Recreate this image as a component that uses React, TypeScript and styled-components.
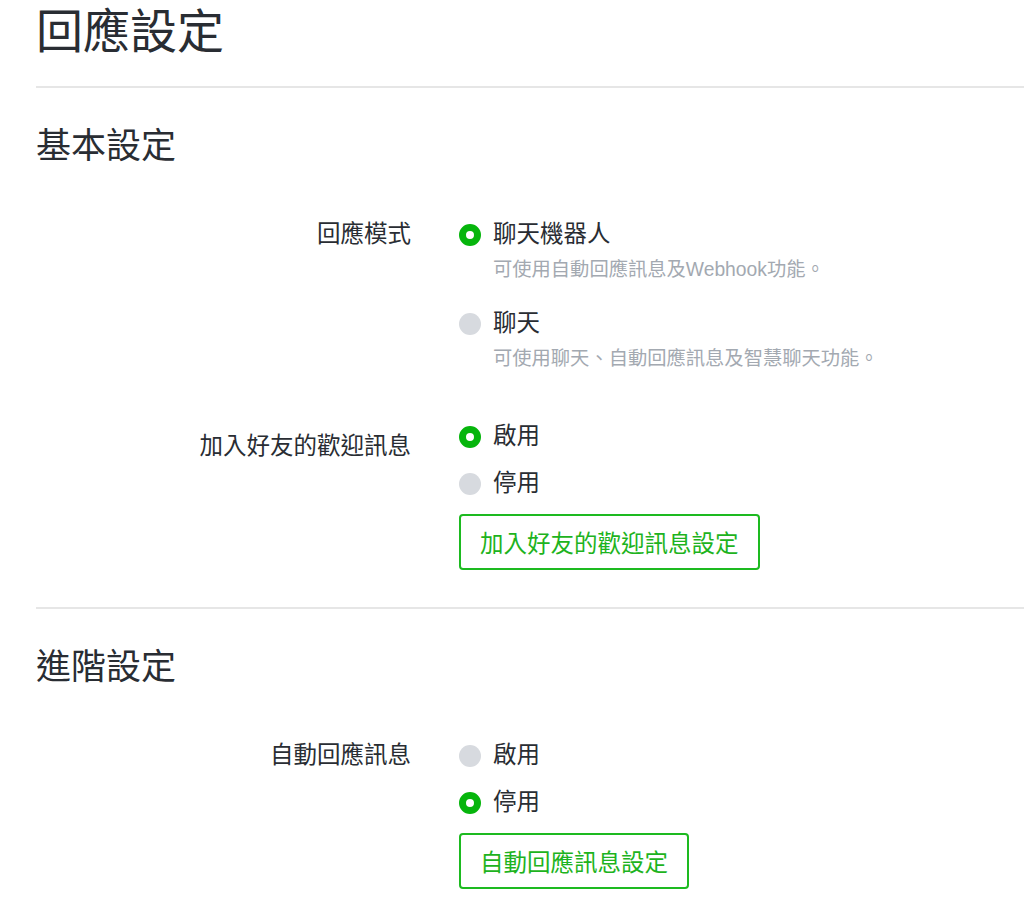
import React from "react";
import styled, { createGlobalStyle } from "styled-components";

const FONT = `"Liberation Sans", "Noto Sans CJK TC", sans-serif`;

const Global = createGlobalStyle`
  html, body { margin: 0; padding: 0; background: #ffffff; }
  body {
    font-family: ${FONT};
    color: #292d33;
  }
`;

const Page = styled.div`
  padding: 0 0 0 36px;
`;

const Title = styled.h1`
  margin: 0;
  font-size: 47px;
  line-height: 64px;
  font-weight: 400;
`;

const Divider = styled.hr<{ $top: number }>`
  margin: ${(p) => p.$top}px 0 0 0;
  border: 0;
  height: 2px;
  background: #e6e6e6;
`;

const SectionTitle = styled.h2`
  margin: 33px 0 0 0;
  font-size: 35px;
  line-height: 50px;
  font-weight: 400;
`;

const Row = styled.div`
  display: grid;
  grid-template-columns: 375px 1fr;
  column-gap: 48px;
  margin-top: 45px;
  &:nth-of-type(n + 2) {
    margin-top: 35px;
  }
`;

const Label = styled.div<{ $offset?: number }>`
  text-align: right;
  font-size: 23.5px;
  line-height: 36px;
  padding-top: ${(p) => p.$offset ?? 0}px;
`;

const Options = styled.div`
  display: flex;
  flex-direction: column;
  align-items: flex-start;
  gap: 11px;
`;

const OptionBlock = styled.div`
  display: flex;
  flex-direction: column;
`;

const Option = styled.label`
  display: flex;
  align-items: flex-start;
  gap: 12px;
  height: 36px;
  line-height: 36px;
  font-size: 23.5px;
  cursor: pointer;
`;

const Dot = styled.span<{ $on: boolean }>`
  box-sizing: border-box;
  margin-top: 8px;
  width: 22px;
  height: 22px;
  border-radius: 50%;
  flex: none;
  background: ${(p) => (p.$on ? "#ffffff" : "#d7dadf")};
  border: ${(p) => (p.$on ? "7px solid #06b50c" : "none")};
`;

const Desc = styled.div`
  padding-left: 34px;
  font-size: 19.3px;
  line-height: 36px;
  color: #a3a9b1;
  margin-bottom: 6px;
`;

const Button = styled.button`
  box-sizing: border-box;
  margin-top: 2px;
  height: 56px;
  padding: 0 19px;
  background: #ffffff;
  border: 2px solid #1dba20;
  border-radius: 4px;
  color: #1db320;
  font-family: ${FONT};
  font-size: 23.5px;
  cursor: pointer;
`;

type Opt = { text: string; on: boolean; desc?: string };

const Radio = ({ opts }: { opts: Opt[] }) => (
  <>
    {opts.map((o) => (
      <OptionBlock key={o.text}>
        <Option>
          <Dot $on={o.on} />
          {o.text}
        </Option>
        {o.desc && <Desc>{o.desc}</Desc>}
      </OptionBlock>
    ))}
  </>
);

export default function App() {
  return (
    <Page>
      <Global />
      <Title>回應設定</Title>
      <Divider $top={22} />

      <SectionTitle>基本設定</SectionTitle>
      <div>
        <Row>
          <Label>回應模式</Label>
          <Options>
            <Radio
              opts={[
                { text: "聊天機器人", on: true, desc: "可使用自動回應訊息及Webhook功能。" },
                { text: "聊天", on: false, desc: "可使用聊天、自動回應訊息及智慧聊天功能。" },
              ]}
            />
          </Options>
        </Row>
        <Row>
          <Label $offset={10}>加入好友的歡迎訊息</Label>
          <Options>
            <Radio
              opts={[
                { text: "啟用", on: true },
                { text: "停用", on: false },
              ]}
            />
            <Button>加入好友的歡迎訊息設定</Button>
          </Options>
        </Row>
      </div>

      <Divider $top={37} />
      <SectionTitle>進階設定</SectionTitle>
      <div>
        <Row>
          <Label>自動回應訊息</Label>
          <Options>
            <Radio
              opts={[
                { text: "啟用", on: false },
                { text: "停用", on: true },
              ]}
            />
            <Button>自動回應訊息設定</Button>
          </Options>
        </Row>
      </div>
    </Page>
  );
}
